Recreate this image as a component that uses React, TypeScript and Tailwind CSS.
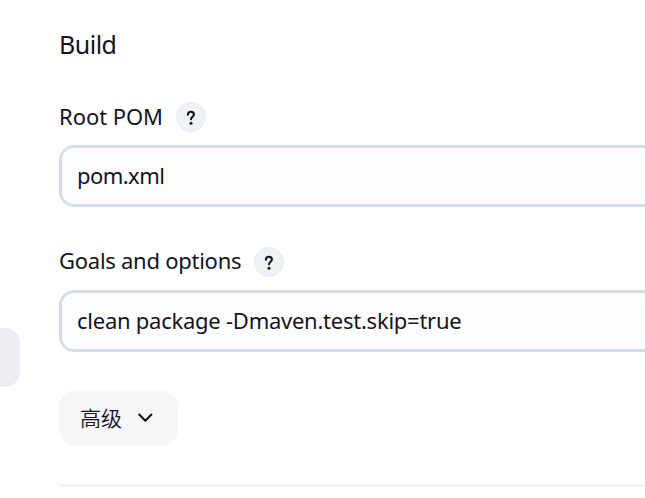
function HelpBadge() {
  return (
    <button className="flex h-[30px] w-[30px] items-center justify-center rounded-full border border-[#e6ebf0] bg-[#eef1f5] pt-px">
      <svg width="10" height="16" viewBox="0 0 10 16" fill="none">
        <path
          d="M1.9 4.7C2 2.8 3.2 1.8 4.9 1.8C6.7 1.8 7.9 2.9 7.9 4.4C7.9 6.6 5 6.8 5 9.3"
          stroke="#14141f"
          strokeWidth="2.1"
          strokeLinecap="round"
        />
        <circle cx="5" cy="13.2" r="1.5" fill="#14141f" />
      </svg>
    </button>
  );
}

function Field({ label, value, labelClass, valueClass }: { label: string; value: string; labelClass: string; valueClass: string }) {
  return (
    <div className="flex flex-col gap-[13px]">
      <div className="flex h-[30px] items-center gap-[13px]">
        <span className={`h-[30px] whitespace-nowrap text-[22px] ${labelClass}`}>{label}</span>
        <HelpBadge />
      </div>
      <div className="flex h-[62px] items-center rounded-l-[15px] border-[3px] border-r-0 border-[#d5dde7] bg-[#fdfdfd] pl-[15px]">
        <span className={`h-[30px] whitespace-nowrap text-[22px] leading-[28px] ${valueClass}`}>{value}</span>
      </div>
    </div>
  );
}

export default function App() {
  return (
    <div className="flex h-[498px] w-[645px] overflow-hidden bg-white font-['Noto_Sans','Noto_Sans_CJK_SC',sans-serif] text-[#14141f]">
      <aside className="w-5 shrink-0 pt-[328px]">
        <div className="h-[59px] rounded-r-[15px] bg-[#ecedf3]" />
      </aside>
      <main className="flex min-w-0 flex-1 flex-col pl-[39px] pt-[28px]">
        <h2 className="h-[34px] w-fit text-[25px] leading-[32px] tracking-[-0.5px]">Build</h2>
        <div className="mt-10 flex flex-col gap-10">
          <Field label="Root POM" value="pom.xml" labelClass="w-[104px] leading-[28px] tracking-[-0.05px]" valueClass="tracking-[-0.55px]" />
          <Field
            label="Goals and options"
            value="clean package -Dmaven.test.skip=true"
            labelClass="w-[182px] leading-[26px] tracking-[-0.26px]"
            valueClass="tracking-[-0.25px]"
          />
        </div>
        <button className="mt-[39px] flex h-[54px] w-[119px] shrink-0 items-center gap-[14px] rounded-[16px] bg-[#f6f6f9] pl-[21px]">
          <span className="h-[30px] font-['Noto_Sans_CJK_SC',sans-serif] text-[21px] font-[350] leading-[28px]">高级</span>
          <svg width="18" height="12" viewBox="0 0 18 12" fill="none">
            <path d="M3.2 2.5L9.3 8.7L15.4 2.5" stroke="#14141f" strokeWidth="2.1" strokeLinecap="round" strokeLinejoin="round" />
          </svg>
        </button>
        <hr className="mt-[39px] h-[3px] shrink-0 border-0 bg-[#f3f3f8]" />
      </main>
    </div>
  );
}
